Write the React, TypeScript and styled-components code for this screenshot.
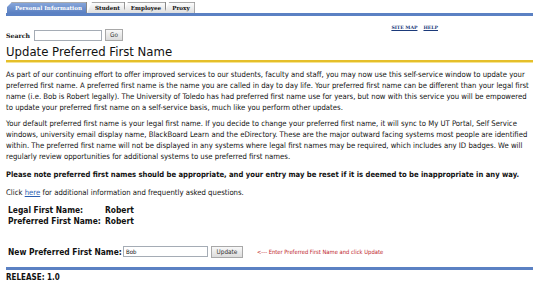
import React from "react";
import styled, { createGlobalStyle } from "styled-components";

const Global = createGlobalStyle`
  html, body { margin: 0; padding: 0; background: #fff; }
  body { font-family: "DejaVu Sans Condensed", "DejaVu Sans", Verdana, sans-serif; font-size: 7.7px; color: #111; }
`;

const Page = styled.div`
  width: 540px;
  height: 282px;
  overflow: hidden;
  padding: 0 6px 0 6px;
  box-sizing: border-box;
`;

const TabBar = styled.div`
  display: flex;
  align-items: flex-end;
  padding-top: 5px;
  padding-left: 1px;
  height: 16px;
  box-sizing: border-box;
  border-bottom: 3px solid #5b81c3;
  margin-right: 1px;
`;

const Tab = styled.div<{ $active?: boolean }>`
  height: 11px;
  display: flex;
  align-items: center;
  padding: 0 5px 0 8px;
  margin-right: ${(p) => (p.$active ? "0" : "-2px")};
  font-weight: bold;
  font-family: "DejaVu Serif", "Liberation Serif", serif;
  font-size: 5.6px;
  white-space: nowrap;
  color: ${(p) => (p.$active ? "#fff" : "#111")};
  background: ${(p) => (p.$active ? "linear-gradient(#8ba9dc, #5a80c2)" : "linear-gradient(#ffffff, #dedede)")};
  clip-path: ${(p) =>
    p.$active
      ? "polygon(5px 0, 100% 0, 100% 100%, 0 100%, 0 5px)"
      : "polygon(5px 0, 100% 0, 100% 100%, 0 100%)"};
  box-shadow: inset -1px 0 0 #888, inset 0 1px 0 #aaa;
  box-sizing: border-box;
`;

const SearchRow = styled.div`
  display: flex;
  align-items: center;
  height: 12px;
  margin-top: 13px;
`;

const SearchLabel = styled.span`
  font-family: "DejaVu Serif", "Liberation Serif", serif;
  font-weight: bold;
  font-size: 6.2px;
  width: 28px;
`;

const TextInput = styled.div<{ $w: number }>`
  width: ${(p) => p.$w}px;
  height: 11px;
  border: 1px solid #a5acb5;
  box-sizing: border-box;
  font-size: 6px;
  display: flex;
  align-items: center;
  padding-left: 2px;
  background: #fff;
`;

const Button = styled.div<{ $w: number }>`
  width: ${(p) => p.$w}px;
  height: 12px;
  margin-left: 3px;
  border: 1px solid #a8a8a8;
  background: linear-gradient(#f8f8f8, #dcdcdc);
  box-sizing: border-box;
  font-size: 6.4px;
  display: flex;
  align-items: center;
  justify-content: center;
  color: #333;
`;

const TopLinks = styled.div`
  margin-left: auto;
  margin-right: 96px;
  display: flex;
  gap: 6px;
  align-self: flex-start;
  margin-top: -4px;
`;

const TopLink = styled.a`
  font-family: "DejaVu Serif", "Liberation Serif", serif;
  font-size: 4.6px;
  font-weight: bold;
  color: #1b3a7a;
  text-decoration: underline;
`;

const Title = styled.h1`
  margin: 3px 1px 0 0;
  font-size: 13px;
  font-weight: normal;
  line-height: 16px;
  color: #111;
  border-bottom: 2px solid #e5bf2a;
  box-shadow: 0 1px 0 #f6e493;
`;

const Para = styled.p<{ $gap?: number }>`
  margin: ${(p) => p.$gap ?? 5}px 0 0 0;
  line-height: 11px;
`;

const BoldPara = styled(Para)`
  font-weight: bold;
  font-size: 7.6px;
  white-space: nowrap;
`;

const Link = styled.a`
  color: #2a5db0;
  text-decoration: underline;
`;

const NameTable = styled.div`
  display: grid;
  grid-template-columns: 97px auto;
  margin-top: 7px;
  font-weight: bold;
  font-size: 8.4px;
  line-height: 11px;
  margin-left: 2px;
  white-space: nowrap;
`;

const UpdateRow = styled.div`
  display: flex;
  align-items: center;
  height: 13px;
  margin-top: 18px;
  margin-left: 2px;
`;

const UpdateLabel = styled.span`
  font-weight: bold;
  font-size: 8.4px;
  width: 115px;
  white-space: nowrap;
`;

const Hint = styled.span`
  color: #c0272d;
  font-size: 5.8px;
  margin-left: 14px;
  white-space: nowrap;
`;

const Footer = styled.div`
  margin: 9px 1px 0 0;
  border-top: 3px solid #5b81c3;
  padding-top: 3px;
  font-weight: bold;
  font-size: 8px;
  line-height: 9px;
`;

export default function App() {
  return (
    <>
      <Global />
      <Page>
        <TabBar>
          <Tab $active>Personal Information</Tab>
          <Tab>Student</Tab>
          <Tab>Employee</Tab>
          <Tab>Proxy</Tab>
        </TabBar>
        <SearchRow>
          <SearchLabel>Search</SearchLabel>
          <TextInput $w={68} />
          <Button $w={18}>Go</Button>
          <TopLinks>
            <TopLink>SITE MAP</TopLink>
            <TopLink>HELP</TopLink>
          </TopLinks>
        </SearchRow>
        <Title>Update Preferred First Name</Title>
        <Para $gap={7}>
          As part of our continuing effort to offer improved services to our students, faculty and staff, you may now use this self-service window to update your preferred first name. A preferred first name is the name you are called in day to day life. Your preferred first name can be different than your legal first name (i.e. Bob is Robert legally). The University of Toledo has had preferred first name use for years, but now with this service you will be empowered to update your preferred first name on a self-service basis, much like you perform other updates.
        </Para>
        <Para>
          Your default preferred first name is your legal first name. If you decide to change your preferred first name, it will sync to My UT Portal, Self Service windows, university email display name, BlackBoard Learn and the eDirectory. These are the major outward facing systems most people are identified within. The preferred first name will not be displayed in any systems where legal first names may be required, which includes any ID badges. We will regularly review opportunities for additional systems to use preferred first names.
        </Para>
        <BoldPara $gap={7}>
          Please note preferred first names should be appropriate, and your entry may be reset if it is deemed to be inappropriate in any way.
        </BoldPara>
        <Para $gap={7}>
          Click <Link>here</Link> for additional information and frequently asked questions.
        </Para>
        <NameTable>
          <span>Legal First Name:</span>
          <span>Robert</span>
          <span>Preferred First Name:</span>
          <span>Robert</span>
        </NameTable>
        <UpdateRow>
          <UpdateLabel>New Preferred First Name:</UpdateLabel>
          <TextInput $w={85}>Bob</TextInput>
          <Button $w={32}>Update</Button>
          <Hint>&lt;--- Enter Preferred First Name and click Update</Hint>
        </UpdateRow>
        <Footer>RELEASE: 1.0</Footer>
      </Page>
    </>
  );
}
